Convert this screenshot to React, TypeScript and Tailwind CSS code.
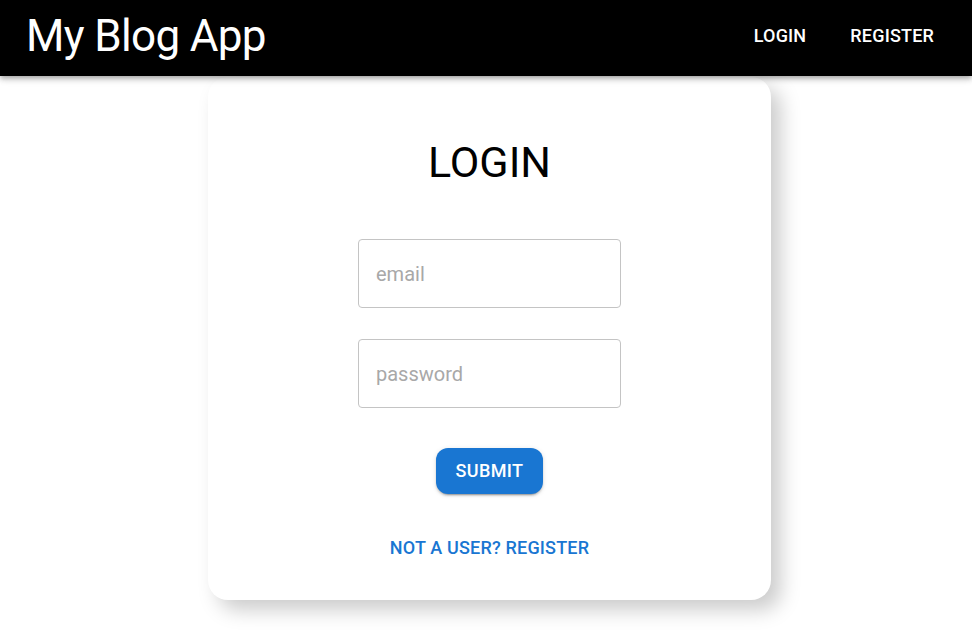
import { useState } from "react";

export default function App() {
  const [email, setEmail] = useState("");
  const [password, setPassword] = useState("");

  return (
    <div className="min-h-[638px] bg-white font-['Roboto',sans-serif]">
      <header className="relative z-10 flex h-[76px] items-center justify-between bg-black pb-[5px] pl-[26px] pr-[20px] text-white shadow-[0_2px_4px_-1px_rgba(0,0,0,0.2),0_4px_5px_0_rgba(0,0,0,0.14),0_1px_10px_0_rgba(0,0,0,0.12)]">
        <h1 className="text-[44px] leading-none font-normal tracking-[-0.015em]">My Blog App</h1>
        <nav className="flex items-center">
          <button className="px-[18px] py-2 text-[18px] font-medium uppercase tracking-[0.01em]">Login</button>
          <button className="ml-[8px] px-[18px] py-2 text-[18px] font-medium uppercase tracking-[0.01em]">Register</button>
        </nav>
      </header>

      <main className="flex justify-center pl-[7px]">
        <form
          onSubmit={(e) => e.preventDefault()}
          className="mt-px flex h-[523px] w-[563px] flex-col items-center rounded-[20px] bg-white shadow-[10px_10px_20px_#ccc]"
        >
          <h2 className="mt-[61px] text-[43px] leading-[48px] font-normal text-black">LOGIN</h2>

          <input
            placeholder="email"
            className="mt-[53px] h-[69px] w-[263px] rounded border border-[#c4c4c4] px-[17px] text-[20px] text-black outline-none placeholder:text-[#a8a8a8] focus:border-[#1976d2]"
            value={email}
            onChange={(e) => setEmail(e.target.value)}
          />

          <input
            type="password"
            placeholder="password"
            className="mt-[31px] h-[69px] w-[263px] rounded border border-[#c4c4c4] px-[17px] text-[20px] text-black outline-none placeholder:text-[#a8a8a8] focus:border-[#1976d2]"
            value={password}
            onChange={(e) => setPassword(e.target.value)}
          />

          <button
            type="submit"
            className="mt-[40px] h-[46px] w-[107px] rounded-[12px] bg-[#1976d2] pb-[2px] text-[18px] font-medium uppercase tracking-[0.02em] text-white shadow-[0_3px_1px_-2px_rgba(0,0,0,0.2),0_2px_2px_0_rgba(0,0,0,0.14),0_1px_5px_0_rgba(0,0,0,0.12)]"
          >
            Submit
          </button>

          <button type="button" className="mt-[40px] text-[18px] font-medium uppercase tracking-[0.01em] text-[#1976d2]">
            Not a user? Register
          </button>
        </form>
      </main>
    </div>
  );
}
